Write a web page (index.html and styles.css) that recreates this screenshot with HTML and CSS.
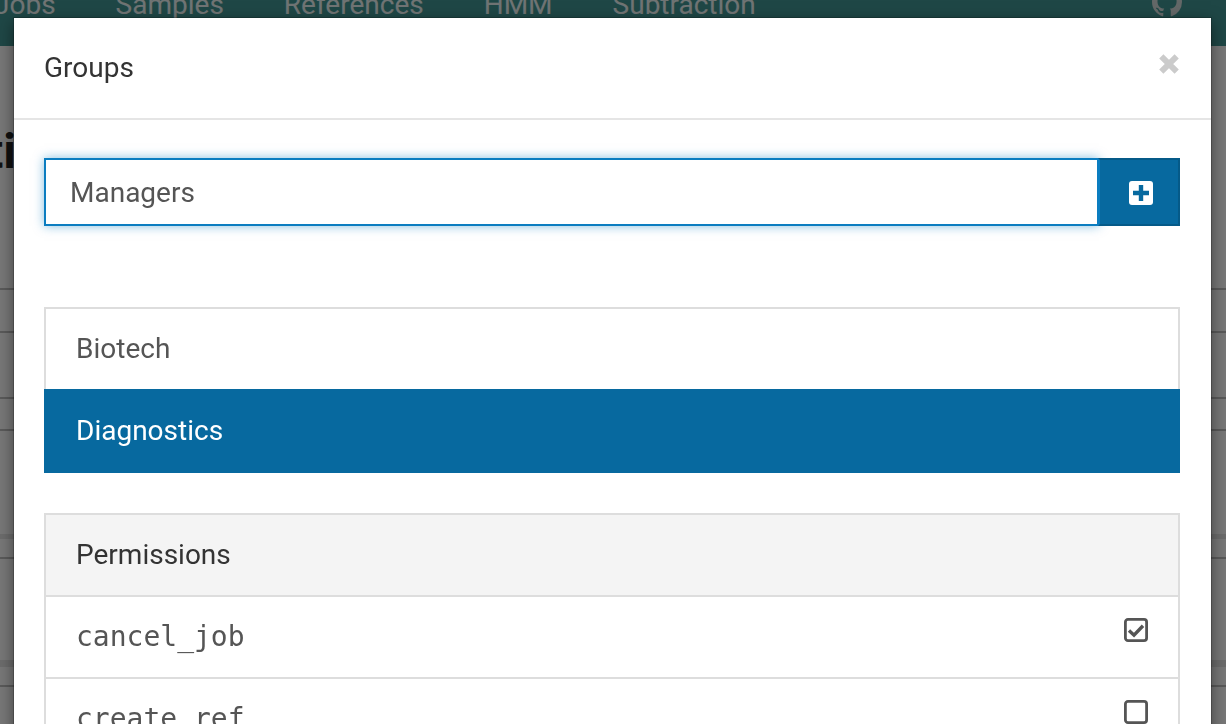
FILE: index.html
```html
<!DOCTYPE html>
<html lang="en">
<head>
<meta charset="utf-8">
<title>Groups</title>
<link rel="stylesheet" href="styles.css">
</head>
<body>
<header class="navbar">
  <a class="nav-link nav-first">Jobs</a>
  <a class="nav-link">Samples</a>
  <a class="nav-link">References</a>
  <a class="nav-link">HMM</a>
  <a class="nav-link">Subtraction</a>
  <svg class="nav-github" viewBox="0 0 16 16" aria-hidden="true"><path d="M8 0C3.58 0 0 3.58 0 8c0 3.54 2.29 6.53 5.47 7.59.4.07.55-.17.55-.38 0-.19-.01-.82-.01-1.49-2.01.37-2.53-.49-2.69-.94-.09-.23-.48-.94-.82-1.13-.28-.15-.68-.52-.01-.53.63-.01 1.08.58 1.23.82.72 1.21 1.87.87 2.33.66.07-.52.28-.87.51-1.07-1.78-.2-3.64-.89-3.64-3.95 0-.87.31-1.59.82-2.15-.08-.2-.36-1.02.08-2.12 0 0 .67-.21 2.2.82.64-.18 1.32-.27 2-.27.68 0 1.36.09 2 .27 1.53-1.04 2.2-.82 2.2-.82.44 1.1.16 1.92.08 2.12.51.56.82 1.27.82 2.15 0 3.07-1.87 3.75-3.65 3.95.29.25.54.73.54 1.48 0 1.07-.01 1.93-.01 2.2 0 .21.15.46.55.38A8.013 8.013 0 0016 8c0-4.42-3.58-8-8-8z"/></svg>
</header>
<main class="page">
  <h1 class="page-title">ti</h1>
  <div class="bg-list">
    <div class="bg-row"></div>
    <div class="bg-row"></div>
    <div class="bg-row"></div>
    <div class="bg-row"></div>
    <div class="bg-row bg-row-soft"></div>
    <div class="bg-row"></div>
    <div class="bg-row bg-row-soft"></div>
    <div class="bg-row"></div>
  </div>
</main>
<div class="backdrop"></div>
<section class="modal">
  <div class="modal-header">
    <h2 class="modal-title">Groups</h2>
    <svg class="close" viewBox="0 0 20 20" aria-label="Close"><path d="M3 3l14 14M17 3L3 17"/></svg>
  </div>
  <div class="modal-body">
    <form class="input-group">
      <input class="group-input" type="text" value="Managers">
      <button class="add-btn" type="button" aria-label="Add">
        <svg class="add-icon" viewBox="0 0 24 24"><rect width="24" height="24" rx="3" fill="#fff"/><path d="M12 4v16M4 12h16" stroke="#07699f" stroke-width="4.4" fill="none"/></svg>
      </button>
    </form>
    <div class="list-group">
      <div class="list-item">Biotech</div>
      <div class="list-item active">Diagnostics</div>
    </div>
    <div class="panel">
      <div class="panel-heading">Permissions</div>
      <div class="perm-row">
        <code class="perm">cancel_job</code>
        <svg class="check" viewBox="0 0 24 24"><rect x="1.4" y="1.4" width="21.2" height="21.2" rx="2.6"/><path class="tick" d="M5 12.6l5 4.6 9-9.4"/></svg>
      </div>
      <div class="perm-row">
        <code class="perm">create_ref</code>
        <svg class="check" viewBox="0 0 24 24"><rect x="1.4" y="1.4" width="21.2" height="21.2" rx="2.6"/></svg>
      </div>
    </div>
  </div>
</section>
</body>
</html>
```
FILE: styles.css
```css
* { box-sizing: border-box; }
html, body { height: 100%; overflow: hidden; }
body {
  margin: 0;
  background: #f0f0f0;
  font-family: Roboto, "Liberation Sans", sans-serif;
  font-size: 28px;
  color: #555;
}
.navbar {
  display: flex;
  align-items: center;
  gap: 60px;
  height: 46px;
  padding: 0 0 37px 0;
  background: #3f8f8c;
  color: #fff;
}
.nav-link { line-height: 30px; color: #e0e8e8; }
.nav-first { margin-left: -6px; }
.nav-github {
  width: 30px;
  height: 30px;
  margin-left: auto;
  margin-right: 44px;
  margin-top: -5px;
  fill: #c8d0d0;
  flex: none;
}
.page-title {
  margin: 82px 0 0 -13px;
  font-size: 48px;
  line-height: 48px;
  font-weight: 700;
  color: #222;
}
.bg-list { margin-top: 112px; }
.bg-row { border-top: 2px solid #b4b4b4; }
.bg-row:nth-child(1) { height: 43px; }
.bg-row:nth-child(2) { height: 66px; }
.bg-row:nth-child(3) { height: 32px; }
.bg-row:nth-child(4) { height: 105px; }
.bg-row:nth-child(5) { height: 23px; }
.bg-row:nth-child(6) { height: 103px; }
.bg-row:nth-child(7) { height: 25px; border-top-width: 7px; }
.bg-row:nth-child(8) { height: 39px; }
.bg-row-soft { border-top: 5px solid #d8d8d8; }
.backdrop {
  position: fixed;
  inset: 0;
  background: rgba(0, 0, 0, 0.5);
}
.modal {
  position: absolute;
  top: 18px;
  left: 14px;
  width: 1197px;
  background: #fff;
  box-shadow: 0 0 0 1px rgba(0, 0, 0, 0.2), 0 5px 15px rgba(0, 0, 0, 0.5);
}
.modal-header {
  display: flex;
  justify-content: space-between;
  align-items: flex-start;
  height: 102px;
  padding: 31px 31px 0 31px;
  border-bottom: 2px solid #e5e5e5;
}
.modal-title {
  margin: 0 0 0 -1px;
  font-size: 28px;
  line-height: 38px;
  font-weight: 400;
  color: #333;
}
.close {
  width: 22px;
  height: 22px;
  margin-top: 4px;
  fill: none;
  stroke: #cbcbcb;
  stroke-width: 5.4;
}
.modal-body { padding: 38px 31px 0 30px; }
.input-group { display: flex; height: 68px; }
.group-input {
  flex: 1;
  min-width: 0;
  margin: 0 -1px 0 0;
  padding: 0 24px;
  position: relative;
  border: 2px solid #0b7dc0;
  outline: none;
  background: #fff;
  font: inherit;
  color: #555;
  box-shadow: 0 0 10px rgba(11, 125, 192, 0.5);
}
.add-btn {
  display: flex;
  align-items: center;
  justify-content: center;
  width: 82px;
  padding: 2px 0 0 4px;
  position: relative;
  border: 2px solid #055a88;
  border-left-color: #0b7dc0;
  background: #07699f;
}
.add-icon { width: 24px; height: 24px; }
.list-group { margin-top: 81px; }
.list-item {
  height: 82px;
  padding: 0 30px 2px;
  display: flex;
  align-items: center;
  border: 2px solid #ddd;
  border-bottom: none;
  background: #fff;
}
.list-item.active {
  height: 84px;
  padding-bottom: 4px;
  border-color: #07699f;
  background: #07699f;
  color: #fff;
}
.panel {
  margin-top: 40px;
  border: 2px solid #ddd;
  border-bottom: none;
}
.panel-heading {
  display: flex;
  align-items: center;
  height: 80px;
  padding: 0 30px 2px;
  background: #f4f4f4;
  color: #333;
}
.perm-row {
  display: flex;
  align-items: flex-start;
  justify-content: space-between;
  height: 82px;
  padding: 21px 30px 0 30px;
  border-top: 2px solid #ddd;
}
.perm {
  font-family: "DejaVu Sans Mono", monospace;
  font-size: 28px;
  line-height: 38px;
  color: #555;
}
.check {
  width: 24px;
  height: 24px;
  fill: none;
  stroke: #555;
  stroke-width: 2.8;
}
.tick { stroke-width: 3.4; }
```
